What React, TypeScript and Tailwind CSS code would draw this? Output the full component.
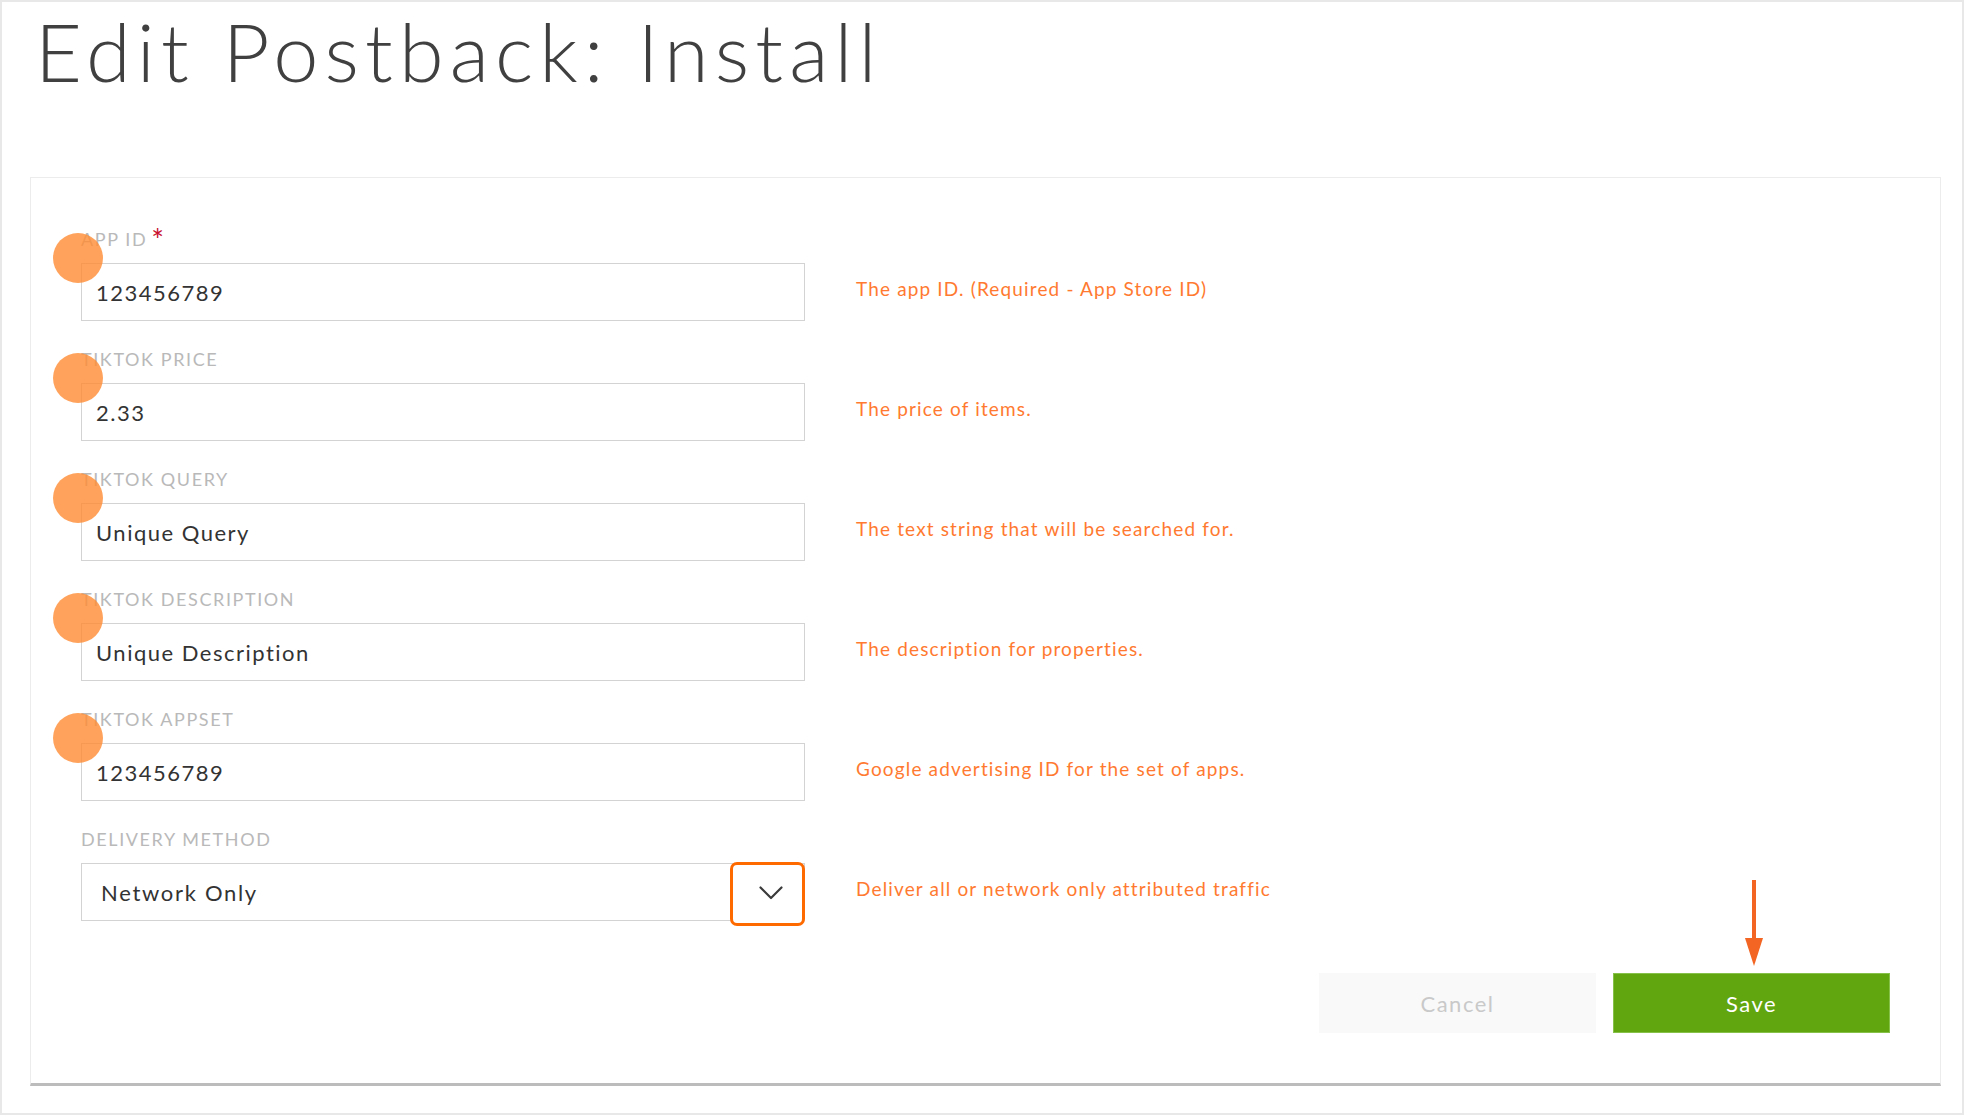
import React from 'react';

type Field = {
    label: string;
    value: string;
    help: string;
    required?: boolean;
};

const fields: Field[] = [
    { label: 'App ID', value: '123456789', help: 'The app ID. (Required - App Store ID)', required: true },
    { label: 'TikTok Price', value: '2.33', help: 'The price of items.' },
    { label: 'TikTok Query', value: 'Unique Query', help: 'The text string that will be searched for.' },
    { label: 'TikTok Description', value: 'Unique Description', help: 'The description for properties.' },
    { label: 'TikTok AppSet', value: '123456789', help: 'Google advertising ID for the set of apps.' },
];

/* ─── Text field row ─────────────────────────────────────── */
function FieldRow({ field }: { field: Field }) {
    return (
        <div className="flex items-end">
            <div className="relative w-[724px] shrink-0">
                <div className="h-[22px] mb-[13px] text-[18px] leading-[22px] tracking-[1.6px] uppercase text-[#b9b9b9] flex items-start">
                    <span>{field.label}</span>
                    {field.required && <span className="ml-[4px] -mt-[4px] text-[30px] leading-[30px] text-[#c8102e]">*</span>}
                </div>
                <div className="h-[58px] border border-[#d3d3d3] bg-white pl-[14px] flex items-center text-[22px] tracking-[1.5px] text-[#333333]">
                    {field.value}
                </div>
                {/* annotation dot */}
                <div className="absolute left-[-28px] top-[5px] h-[50px] w-[50px] rounded-full bg-[#ff8c33]/80" />
            </div>
            <div className="ml-[51px] h-[58px] flex items-center pb-[6px] text-[19px] tracking-[1.15px] text-[#ff7a30]">{field.help}</div>
        </div>
    );
}

export default function App() {
    return (
        <div className="relative w-[1964px] h-[1115px] overflow-hidden border-2 border-[#e8e8e8] bg-white font-['Lato',sans-serif]">
            {/* Title */}
            <h1 className="pt-[8px] pl-[33px] text-[81px] leading-none font-light tracking-[6.1px] text-[#404040]">Edit Postback: Install</h1>

            {/* Form card */}
            <div className="mt-[86px] ml-[28px] w-[1911px] border border-[#ececec] border-b-[3px] border-b-[#bcbcbc] pt-[50px] pb-[50px]">
                <div className="flex flex-col gap-[27px] pl-[50px]">
                    {fields.map((f) => (
                        <FieldRow key={f.label} field={f} />
                    ))}

                    {/* Delivery method */}
                    <div className="flex items-end">
                        <div className="relative w-[724px] shrink-0">
                            <div className="h-[22px] mb-[13px] text-[18px] leading-[22px] tracking-[1.6px] uppercase text-[#b9b9b9]">Delivery Method</div>
                            <div className="relative h-[58px] border border-[#d3d3d3] bg-white pl-[19px] flex items-center text-[22px] tracking-[1.7px] text-[#333333]">
                                Network Only
                                <div className="absolute left-[648px] top-[-2px] h-[64px] w-[75px] rounded-[7px] border-[3px] border-[#ff6a00] bg-white flex items-center justify-center pb-[3px] pl-[6px]">
                                    <svg width="24" height="14" viewBox="0 0 24 14" fill="none">
                                        <path d="M1.5 1.5 L12 12 L22.5 1.5" stroke="#3a3a3a" strokeWidth="2.2" strokeLinecap="round" strokeLinejoin="round" />
                                    </svg>
                                </div>
                            </div>
                        </div>
                        <div className="ml-[51px] h-[58px] flex items-center pb-[6px] text-[19px] tracking-[1.15px] text-[#ff7a30]">Deliver all or network only attributed traffic</div>
                    </div>
                </div>

                {/* Actions */}
                <div className="mt-[52px] pr-[50px] flex justify-end gap-[17px]">
                    <button className="w-[277px] h-[60px] bg-[#f9f9f9] text-[22px] tracking-[1.5px] text-[#c9c9c9]">Cancel</button>
                    <button className="w-[277px] h-[60px] bg-[#62a60f] border border-[#86c24a] text-[22px] tracking-[1.5px] text-white">Save</button>
                </div>
            </div>

            {/* annotation arrow */}
            <svg className="absolute left-[1741px] top-[876px]" width="22" height="90" viewBox="0 0 22 90" fill="none">
                <rect x="9" y="2" width="4" height="60" fill="#f26522" />
                <path d="M2 60 L20 60 L11 88 Z" fill="#f26522" />
            </svg>
        </div>
    );
}
